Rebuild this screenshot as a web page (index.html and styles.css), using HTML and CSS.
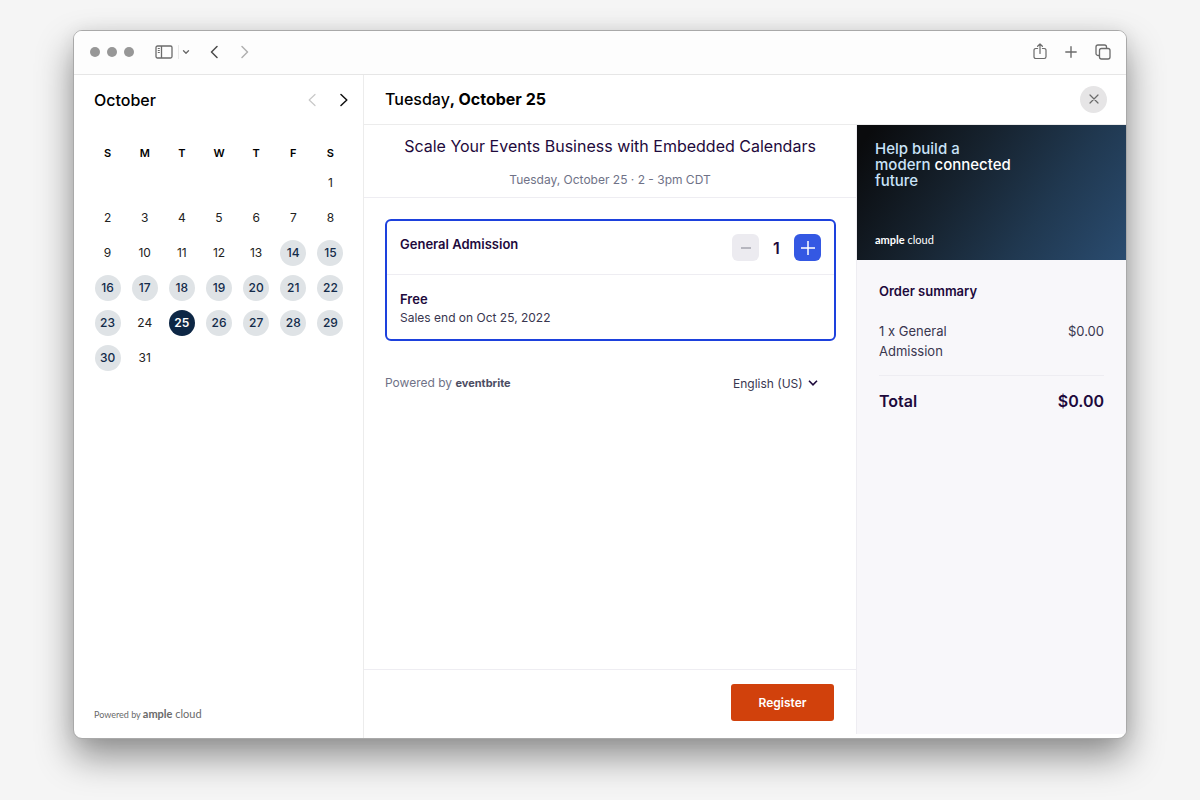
FILE: index.html
```
<!DOCTYPE html>
<html lang="en">
<head>
    <meta charset="UTF-8">
    <meta name="viewport" content="width=device-width, initial-scale=1.0">
    <title>Ample Cloud Events</title>
    <link rel="stylesheet" href="styles.css">
</head>
<body>

    <div class="window">
        <header class="toolbar">
            <div class="dots">
                <span class="dot"></span>
                <span class="dot"></span>
                <span class="dot"></span>
            </div>
            <button class="tool sidebar-btn" aria-label="Sidebar">
                <svg width="18" height="14" viewBox="0 0 18 14" fill="none" stroke="#6b6b6b" stroke-width="1.3">
                    <rect x="1" y="1" width="16" height="12" rx="1.500"/>
                    <path d="M6.500 1v12"/>
                    <path d="M2.800 3.500h2M2.800 5.500h2M2.800 7.500h2" stroke-width="1"/>
                </svg>
            </button>
            <button class="tool menu-btn" aria-label="Sidebar menu">
                <svg width="8" height="6" viewBox="0 0 8 6" fill="none" stroke="#6b6b6b" stroke-width="1.4" stroke-linecap="round" stroke-linejoin="round"><path d="M1.5 1.7L4 4.2l2.5-2.5"/></svg>
            </button>
            <button class="tool back-btn" aria-label="Back">
                <svg width="8" height="14" viewBox="0 0 8 14" fill="none" stroke="#4a4a4a" stroke-width="1.5" stroke-linecap="round" stroke-linejoin="round"><path d="M7 1.5L1.5 7 7 12.5"/></svg>
            </button>
            <button class="tool forward-btn" aria-label="Forward">
                <svg width="8" height="14" viewBox="0 0 8 14" fill="none" stroke="#b0b0b0" stroke-width="1.5" stroke-linecap="round" stroke-linejoin="round"><path d="M1 1.5L6.5 7 1 12.5"/></svg>
            </button>
            <div class="tools-right">
                <button class="tool" aria-label="Share">
                    <svg width="14" height="17" viewBox="0 0 14 17" fill="none" stroke="#6b6b6b" stroke-width="1.2" stroke-linecap="round" stroke-linejoin="round"><path d="M4.6 5.5H2.7A1.7 1.7 0 0 0 1 7.2v6.6a1.7 1.7 0 0 0 1.7 1.7h8.6a1.7 1.7 0 0 0 1.7-1.7V7.2a1.7 1.7 0 0 0-1.7-1.7H9.4M7 10.500V1M4.6 3.3L7 1l2.4 2.3"/></svg>
                </button>
                <button class="tool" aria-label="New tab">
                    <svg width="12" height="12" viewBox="0 0 12 12" fill="none" stroke="#6b6b6b" stroke-width="1.4" stroke-linecap="round"><path d="M6 .8v10.4M.8 6h10.4"/></svg>
                </button>
                <button class="tool" aria-label="Tabs">
                    <svg width="16" height="16" viewBox="0 0 16 16" fill="none" stroke="#6b6b6b" stroke-width="1.3" stroke-linejoin="round"><rect x="4.5" y="4.5" width="10.5" height="10.5" rx="2"/><path d="M4.5 11.5H3a2 2 0 0 1-2-2V3a2 2 0 0 1 2-2h6.500a2 2 0 0 1 2 2v1.500"/></svg>
                </button>
            </div>
        </header>

        <div class="content">
            <aside class="calendar">
                <div class="month">
                    <h2>October</h2>
                    <button class="tool" aria-label="Previous month">
                        <svg width="8" height="14" viewBox="0 0 8 14" fill="none" stroke="#c8c8c8" stroke-width="1.2" stroke-linecap="round" stroke-linejoin="round"><path d="M7 1.5L1.2 7 7 12.5"/></svg>
                    </button>
                    <button class="tool" aria-label="Next month">
                        <svg width="8" height="14" viewBox="0 0 8 14" fill="none" stroke="#111" stroke-width="1.5" stroke-linecap="round" stroke-linejoin="round"><path d="M1 1.5L6.8 7 1 12.5"/></svg>
                    </button>
                </div>
                <table class="days">
                    <thead>
                        <tr><th>S</th><th>M</th><th>T</th><th>W</th><th>T</th><th>F</th><th>S</th></tr>
                    </thead>
                    <tbody>
                        <tr><td></td><td></td><td></td><td></td><td></td><td></td><td>1</td></tr>
                        <tr><td>2</td><td>3</td><td>4</td><td>5</td><td>6</td><td>7</td><td>8</td></tr>
                        <tr><td>9</td><td>10</td><td>11</td><td>12</td><td>13</td><td><button class="open">14</button></td><td><button class="open">15</button></td></tr>
                        <tr><td><button class="open">16</button></td><td><button class="open">17</button></td><td><button class="open">18</button></td><td><button class="open">19</button></td><td><button class="open">20</button></td><td><button class="open">21</button></td><td><button class="open">22</button></td></tr>
                        <tr><td><button class="open">23</button></td><td>24</td><td><button class="open selected">25</button></td><td><button class="open">26</button></td><td><button class="open">27</button></td><td><button class="open">28</button></td><td><button class="open">29</button></td></tr>
                        <tr><td><button class="open">30</button></td><td>31</td><td></td><td></td><td></td><td></td><td></td></tr>
                    </tbody>
                </table>
                <p class="powered">Powered by <span class="brand"><b>ample</b> cloud</span></p>
            </aside>

            <section class="event">
                <div class="event-head">
                    <h1>Tuesday<b>, October 25</b></h1>
                    <button class="close" aria-label="Close">
                        <svg width="10" height="10" viewBox="0 0 10 10" fill="none" stroke="#6b6b6b" stroke-width="1.2" stroke-linecap="round"><path d="M1 1l8 8M9 1L1 9"/></svg>
                    </button>
                </div>

                <div class="checkout">
                    <main class="tickets">
                        <div class="event-title">
                            <h2>Scale Your Events Business with Embedded Calendars</h2>
                            <p>Tuesday, October 25 · 2 - 3pm CDT</p>
                        </div>

                        <div class="ticket">
                            <div class="ticket-top">
                                <label for="quantity">General Admission</label>
                                <div class="stepper">
                                    <button class="minus" aria-label="Remove one">
                                        <svg width="12" height="2" viewBox="0 0 12 2"><path d="M1 1h10" stroke="#a5a4af" stroke-width="1.4"/></svg>
                                    </button>
                                    <input type="text" id="quantity" value="1">
                                    <button class="plus" aria-label="Add one">
                                        <svg width="16" height="16" viewBox="0 0 16 16"><path d="M8 1v14M1 8h14" stroke="#fff" stroke-width="1.5"/></svg>
                                    </button>
                                </div>
                            </div>
                            <div class="ticket-info">
                                <h3>Free</h3>
                                <p>Sales end on Oct 25, 2022</p>
                            </div>
                        </div>

                        <div class="under">
                            <p>Powered by <b>eventbrite</b></p>
                            <div class="language">
                                <select aria-label="Language">
                                    <option>English (US)</option>
                                </select>
                                <svg width="10" height="8" viewBox="0 0 10 8" fill="none" stroke="#1e0a3c" stroke-width="1.6"><path d="M1 1.8l4 4 4-4"/></svg>
                            </div>
                        </div>

                        <div class="register-bar">
                            <button class="register">Register</button>
                        </div>
                    </main>

                    <aside class="summary">
                        <div class="banner">
                            <p class="slogan">Help build a<br>modern <em>connected</em><br>future</p>
                            <p class="brand"><b>ample</b> cloud</p>
                        </div>
                        <div class="order">
                            <h3>Order summary</h3>
                            <div class="line">
                                <span class="item">1 x General Admission</span>
                                <span>$0.00</span>
                            </div>
                            <div class="total">
                                <span>Total</span>
                                <span>$0.00</span>
                            </div>
                        </div>
                    </aside>
                </div>
            </section>
        </div>
    </div>

</body>
</html>
```
FILE: styles.css
```
* {
    box-sizing: border-box;
}

body {
    margin: 0;
    min-height: 100vh;
    padding: 30px 73px 61px;
    display: flex;
    background-color: #f5f5f5;
    font-family: Inter, "Liberation Sans", sans-serif;
    font-size: 13px;
    color: #000;
}

h1, h2, h3, p {
    margin: 0;
}

button, input, select {
    font-family: inherit;
    border: none;
    padding: 0;
    margin: 0;
}

button {
    cursor: pointer;
}

svg {
    display: block;
}

/* Browser window */
.window {
    flex: 1;
    display: flex;
    flex-direction: column;
    background-color: #fff;
    border: 1px solid #a9a9a9;
    border-radius: 9px;
    overflow: hidden;
    box-shadow: 0 18px 36px rgba(0, 0, 0, 0.42), 0 0 18px rgba(0, 0, 0, 0.06);
}

.toolbar {
    display: flex;
    align-items: center;
    height: 44px;
    padding: 0 15px 2px 16px;
    border-bottom: 1px solid #e6e6e6;
    background-color: #fdfdfd;
}

.dots {
    display: flex;
    gap: 7px;
}

.dot {
    width: 10px;
    height: 10px;
    border-radius: 50%;
    background-color: #979797;
}

.tool {
    background: none;
}

.sidebar-btn {
    margin-left: 21px;
}

.menu-btn {
    display: flex;
    align-items: center;
    height: 14px;
    margin-left: 5px;
    padding-left: 3px;
    border-left: 1px solid #e8e8e8;
}

.back-btn {
    margin-left: 20px;
}

.forward-btn {
    margin-left: 23px;
}

.tools-right {
    display: flex;
    align-items: center;
    gap: 18px;
    margin-left: auto;
}

.content {
    flex: 1;
    display: flex;
}

/* Calendar */
.calendar {
    width: 290px;
    flex-shrink: 0;
    display: flex;
    flex-direction: column;
    padding: 0 14px 18px 15px;
    border-right: 1px solid #ececec;
}

.month {
    display: flex;
    align-items: center;
    gap: 24px;
    height: 50px;
    padding: 0 1px 0 5px;
}

.month h2 {
    flex: 1;
    font-size: 16px;
    font-weight: 500;
}

.days {
    width: 100%;
    table-layout: fixed;
    border-collapse: collapse;
    margin-top: 8px;
}

.days th {
    height: 32px;
    padding: 8px 0 0;
    font-size: 11px;
    font-weight: 600;
    text-align: center;
}

.days td {
    height: 35px;
    padding: 0;
    font-size: 12px;
    text-align: center;
    color: #222;
}

.open {
    width: 26px;
    height: 26px;
    border-radius: 50%;
    background-color: #dfe3e6;
    color: #132b4a;
    font-size: 12px;
    font-weight: 500;
}

.selected {
    background-color: #0d2745;
    color: #fff;
    font-weight: 600;
}

.powered {
    margin-top: auto;
    padding-left: 5px;
    font-family: Lato, sans-serif;
    font-size: 9px;
    color: #6a6a6a;
}

.brand {
    font-family: Lato, sans-serif;
    font-size: 11px;
}

/* Event */
.event {
    flex: 1;
    display: flex;
    flex-direction: column;
}

.event-head {
    display: flex;
    align-items: center;
    justify-content: space-between;
    height: 50px;
    padding: 0 19px 1px 21px;
    border-bottom: 1px solid #ececec;
}

.event-head h1 {
    font-size: 16px;
    font-weight: 500;
}

.event-head b {
    font-weight: 700;
}

.close {
    display: flex;
    align-items: center;
    justify-content: center;
    width: 27px;
    height: 27px;
    border-radius: 50%;
    background-color: #e6e5e6;
}

.checkout {
    flex: 1;
    display: flex;
}

.tickets {
    flex: 1;
    display: flex;
    flex-direction: column;
    color: #1e0a3c;
}

.event-title {
    height: 73px;
    padding-top: 9px;
    border-bottom: 1px solid #eeedf2;
    text-align: center;
}

.event-title h2 {
    font-size: 16px;
    line-height: 24px;
    font-weight: 400;
}

.event-title p {
    margin-top: 13px;
    font-size: 12px;
    line-height: 18px;
    color: #6f7287;
}

.ticket {
    margin: 21px 20px 0 21px;
    border: 2px solid #1d41dd;
    border-radius: 6px;
}

.ticket-top {
    display: flex;
    justify-content: space-between;
    height: 54px;
    padding: 13px 13px 0;
    border-bottom: 1px solid #eeedf2;
}

.ticket-top label {
    font-size: 13px;
    line-height: 20px;
    font-weight: 600;
}

.stepper {
    display: flex;
    align-items: center;
    height: 27px;
}

.minus, .plus {
    display: flex;
    align-items: center;
    justify-content: center;
    width: 27px;
    height: 27px;
    border-radius: 6px;
    background-color: #ecebf0;
}

.plus {
    background-color: #3458e3;
}

.stepper input {
    width: 35px;
    background: none;
    font-size: 16px;
    font-weight: 600;
    text-align: center;
    color: #1e0a3c;
}

.ticket-info {
    height: 64px;
    padding: 14px 13px 0;
}

.ticket-info h3 {
    font-size: 13px;
    line-height: 20px;
    font-weight: 600;
}

.ticket-info p {
    font-size: 12px;
    line-height: 18px;
    color: #39364f;
}

.under {
    display: flex;
    align-items: center;
    justify-content: space-between;
    padding: 32px 38px 0 21px;
    font-size: 12px;
    line-height: 20px;
    color: #6f7287;
}

.under b {
    font-size: 11px;
    font-weight: 700;
    color: #4b4d63;
}

.language {
    display: flex;
    align-items: center;
    gap: 5px;
}

.language select {
    appearance: none;
    background: none;
    font-size: 12px;
    color: #39364f;
}

.register-bar {
    display: flex;
    justify-content: flex-end;
    height: 69px;
    margin-top: auto;
    padding: 14px 22px 0 0;
    border-top: 1px solid #eeedf2;
}

.register {
    width: 103px;
    height: 37px;
    border-radius: 3px;
    background-color: #d1410c;
    color: #fff;
    font-size: 12px;
    font-weight: 600;
}

/* Order summary */
.summary {
    width: 270px;
    margin-bottom: 4px;
    border-left: 1px solid #eeedf2;
    background-color: #f8f7fa;
    color: #1e0a3c;
}

.banner {
    display: flex;
    flex-direction: column;
    justify-content: space-between;
    height: 135px;
    padding: 16px 18px 14px;
    background: linear-gradient(125deg, #0a0b0d 5%, #16222e 38%, #203850 68%, #2a4c70 100%);
    color: #fff;
}

.slogan {
    font-size: 15px;
    line-height: 16px;
    font-weight: 500;
    color: #c9e2f8;
}

.slogan em {
    font-style: normal;
    color: #fff;
}

.order {
    padding: 21px 22px;
}

.order h3 {
    font-size: 13px;
    line-height: 20px;
    font-weight: 600;
}

.line {
    display: flex;
    justify-content: space-between;
    margin-top: 20px;
    padding-bottom: 14px;
    border-bottom: 1px solid #eeedf2;
    line-height: 20px;
    color: #39364f;
}

.item {
    width: 90px;
}

.total {
    display: flex;
    justify-content: space-between;
    margin-top: 13px;
    font-size: 16px;
    line-height: 24px;
    font-weight: 600;
}
```
